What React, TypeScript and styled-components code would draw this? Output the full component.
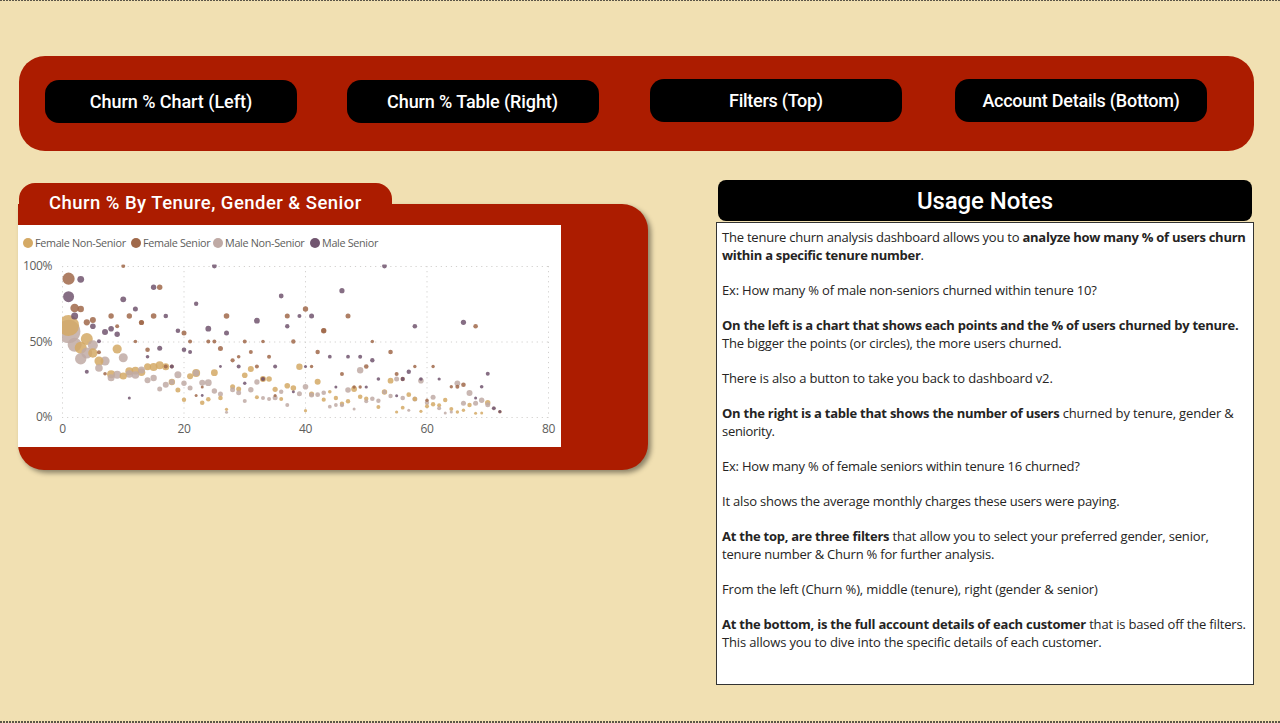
import React from "react";
import styled, { createGlobalStyle } from "styled-components";

const GlobalStyle = createGlobalStyle`
  * { box-sizing: border-box; }
  body { margin: 0; background: #f1e0b2; overflow: hidden; }
`;

const din = `Roboto, "Liberation Sans", sans-serif`;
const segoe = `"Open Sans", "Noto Sans", sans-serif`;

const Page = styled.div`
  width: 1280px;
  height: 723px;
  display: flex;
  flex-direction: column;
  background: #f1e0b2;
`;

const Rule = styled.div<{ $thickness: number }>`
  height: ${(p) => p.$thickness}px;
  flex: none;
  background: repeating-linear-gradient(90deg, #5c5648 0 2px, #f1e0b2 2px 3px);
`;

const Content = styled.main`
  flex: 1;
  min-height: 0;
  padding: 55px 26px 0 18px;
`;

const NavBar = styled.nav`
  display: flex;
  align-items: flex-start;
  height: 95px;
  margin-left: 1px;
  padding: 23px 0 0 26px;
  border-radius: 26px;
  background: #ac1c00;
`;

const NavButton = styled.button<{ $gap: number; $drop: number; $spacing: number }>`
  width: 252px;
  height: 43px;
  flex: none;
  margin: ${(p) => p.$drop}px ${(p) => p.$gap}px 0 0;
  padding: 0;
  border: 0;
  border-radius: 14px;
  background: #000;
  color: #fff;
  font: 500 18px/43px ${din};
  letter-spacing: ${(p) => p.$spacing}px;
  white-space: nowrap;
`;

const Columns = styled.div`
  display: flex;
  justify-content: space-between;
  align-items: flex-start;
  padding-top: 29px;
`;

const ChartCard = styled.section`
  width: 630px;
  padding-top: 2.5px;
`;

const ChartTab = styled.h2`
  position: relative;
  z-index: 1;
  width: 372.5px;
  height: 42.5px;
  margin: 0 0 0 1px;
  padding-left: 30px;
  border-radius: 16px 16px 0 0;
  background: #ac1c00;
  color: #fff;
  font: 500 18.5px/40px ${din};
  letter-spacing: 0.46px;
  white-space: nowrap;
`;

const ChartBody = styled.div`
  height: 266px;
  margin-top: -21px;
  padding-top: 21px;
  border-radius: 0 26px 26px 26px;
  background: #ac1c00;
  box-shadow: 3px 3px 5px rgba(0, 0, 0, 0.42);
`;

const ChartPanel = styled.div`
  width: 543px;
  height: 222px;
  background: #fff;
`;

const Legend = styled.div`
  display: flex;
  height: 28px;
  padding: 8px 0 0 5px;
  align-items: center;
`;

const LegendItem = styled.span<{ $width: number; $color: string }>`
  display: flex;
  align-items: center;
  width: ${(p) => p.$width}px;
  color: #605e5c;
  font: 10.8px/16px ${segoe};
  letter-spacing: -0.32px;
  white-space: nowrap;

  &::before {
    content: "";
    width: 10px;
    height: 10px;
    flex: none;
    margin-right: 2px;
    border-radius: 50%;
    background: ${(p) => p.$color};
  }
`;

const Plot = styled.svg`
  display: block;
  font: 12px ${segoe};
  letter-spacing: -0.4px;
  fill: #605e5c;
`;

const Notes = styled.section`
  width: 538px;
`;

const NotesTitle = styled.h2`
  height: 41px;
  margin: 0 2px 1px;
  border-radius: 8px;
  background: #000;
  color: #fff;
  font: 500 24px/42px ${din};
  letter-spacing: -0.1px;
  text-align: center;
`;

const NotesBox = styled.div`
  height: 463px;
  padding: 6.2px 5px;
  border: 1px solid #333;
  background: #fff;
  color: #252423;
  font: 13px/17.59px ${segoe};
`;

const Para = styled.p`
  margin: 0 0 17.59px;
`;

const Line = styled.span<{ $spacing?: number }>`
  display: block;
  white-space: nowrap;
  letter-spacing: ${(p) => p.$spacing ?? -0.2}px;
`;

const Strong = styled.b<{ $spacing?: number }>`
  letter-spacing: ${(p) => p.$spacing ?? -0.25}px;
`;

type Point = [tenure: number, y: number, r: number];

const femaleNonSenior: Point[] = [
  [1, 325.6, 10.5], [3, 347.7, 6], [4, 339, 6], [5, 353, 4.7], [6, 361, 4.5], [8, 374.3, 4], [9, 349, 4.6],
  [10, 376, 3.6], [11, 371.3, 4], [12, 370.7, 3.9], [13, 372.3, 3.8], [14, 366.7, 3.5], [15, 367, 4],
  [16, 365.3, 4], [17, 366.7, 3.5], [18, 382, 3.2], [19, 390, 2.5], [20, 399.7, 2.2], [21, 376.3, 3],
  [22, 373, 4], [23, 402.7, 2.3], [24, 399.3, 2.3], [25, 372.7, 3.4], [26, 398, 2.3], [27, 409.3, 1.6],
  [28, 386.7, 2.5], [29, 389, 2.5], [30, 375.3, 2.8], [31, 369, 3], [32, 397.3, 2], [33, 379, 3],
  [34, 379, 2.8], [35, 389.3, 2.6], [36, 399, 2], [37, 385.7, 2.8], [38, 388, 2.8], [39, 366.7, 3.2],
  [40, 410.7, 1.6], [41, 394, 2.6], [42, 381.7, 3], [43, 399.7, 2.1], [44, 391.7, 1.8], [45, 398, 2.2],
  [46, 403.7, 2.2], [47, 401.3, 2.2], [48, 389, 2.9], [49, 396.7, 2.3], [50, 398.7, 2.2], [52, 407, 2],
  [53, 392, 2.7], [54, 380.7, 2.9], [55, 412, 1.6], [56, 407.7, 1.9], [57, 394.7, 2.4], [58, 399, 2.2],
  [59, 411.3, 1.6], [60, 406.3, 2], [61, 404.3, 2.2], [62, 405.3, 2], [63, 400, 2.2], [64, 409, 2],
  [65, 412, 1.7], [66, 410.3, 1.7], [67, 405, 2.2], [68, 413.3, 1.5], [69, 413, 1.5], [70, 402.7, 2.7],
];

const femaleSenior: Point[] = [
  [1, 278.7, 6.1], [2, 308, 4.3], [3, 309, 3.2], [4, 322.3, 3.1], [5, 320, 3], [6, 352.3, 2], [7, 373.7, 1.8],
  [8, 316, 2.7], [9, 326.3, 2], [10, 266, 2], [11, 316, 2.7], [12, 341.5, 1.8], [13, 322.5, 2.6],
  [13, 322.5, 2.3], [14, 349.7, 2.3], [15, 316, 2.8], [16, 287.3, 2.7], [17, 366.5, 2], [18, 366.5, 2],
  [20, 333, 2.5], [21, 341.5, 2], [22, 395.5, 1.5], [23, 387, 1.5], [24, 341.5, 2], [25, 341.5, 2],
  [26, 348.5, 2.5], [27, 316, 2.8], [28, 360.3, 2.1], [29, 356.7, 1.8], [30, 341.5, 2], [31, 352, 2],
  [32, 366.5, 2], [33, 379, 2.2], [33, 341.5, 1.8], [34, 356.7, 2], [35, 395.5, 1.5], [37, 316, 2.5],
  [38, 341.5, 2.2], [40, 309, 2.7], [41, 366.5, 1.7], [42, 352, 2.2], [43, 330.7, 2.7], [43, 330.7, 2.4],
  [46, 374, 2], [47, 316, 2.5], [48, 387, 1.7], [49, 387, 1.7], [50, 366.5, 2.3], [51, 341.5, 1.7],
  [54, 352, 2.3], [55, 374, 2], [56, 379, 2.2], [58, 366.5, 1.7], [60, 400.3, 1.7], [61, 366.5, 1.7],
  [64, 386.7, 1.7], [65, 386.7, 2], [66, 384.7, 2.3], [68, 326.3, 2.3], [72, 411.7, 1.8],
];

const maleNonSenior: Point[] = [
  [1, 331.5, 11.8], [2, 344.7, 7], [3, 358.7, 5.7], [4, 353, 5.5], [5, 345.3, 5], [6, 368, 3.8], [7, 361, 4.6],
  [8, 377.7, 3.5], [9, 374.7, 4], [10, 357.7, 4.5], [11, 374, 3.8], [12, 375, 3.8], [13, 370, 3.5],
  [14, 380.3, 3], [15, 378, 3.2], [16, 389, 2.5], [17, 384.7, 3], [18, 382, 2.8], [19, 374.7, 3.5],
  [20, 383.3, 2.7], [21, 388, 2.5], [22, 373, 3.2], [23, 382.7, 3], [24, 382.7, 3.4], [25, 391, 2.7],
  [26, 394, 2.5], [27, 412.3, 1.5], [28, 389.7, 2.5], [29, 392.7, 2.5], [30, 401, 2], [31, 389.7, 2.7],
  [32, 382, 2.7], [33, 398, 2], [34, 399, 2], [35, 397.7, 2.5], [36, 391.7, 2.2], [37, 405, 2],
  [39, 393.7, 2.5], [40, 386.7, 2.8], [41, 395, 2.5], [42, 394.7, 2.4], [43, 392.7, 2.3], [44, 406.7, 1.9],
  [45, 405, 1.9], [46, 405.3, 2], [47, 390, 2.8], [48, 409, 1.5], [49, 370.3, 3.2], [50, 401.3, 2],
  [51, 398.7, 2.3], [52, 400.7, 2.2], [53, 392, 2.2], [54, 396, 2.2], [55, 379, 2.5], [56, 398, 2.3],
  [57, 410.3, 1.5], [58, 399, 2.5], [59, 380.7, 2.8], [60, 402.7, 2.2], [61, 397.3, 2.5], [62, 408.3, 2],
  [63, 413, 1.5], [64, 412, 1.6], [65, 383.3, 2.9], [66, 403.3, 2.5], [67, 393, 3], [68, 403.3, 2.5],
  [69, 400.3, 2.7], [70, 404.7, 2.5], [71, 408.3, 2.1],
];

const maleSenior: Point[] = [
  [1, 296.7, 5.5], [2, 316, 3.5], [3, 279.3, 3.4], [4, 371.7, 2], [5, 326.3, 2.8], [6, 341.3, 2], [7, 332, 3],
  [8, 328.7, 2.8], [9, 334.3, 2.7], [10, 299.3, 2.9], [11, 398, 1.5], [12, 309, 2.5], [14, 356.7, 1.8],
  [15, 287.3, 2.7], [16, 348.3, 2.5], [17, 316, 2.3], [18, 366.5, 1.9], [19, 330.7, 2.3], [20, 349.7, 2.3],
  [21, 352, 2], [22, 303.7, 2.2], [23, 395.5, 1.4], [24, 328.7, 2.9], [25, 266, 2.4], [26, 366.5, 1.4],
  [27, 333, 2.5], [29, 366.5, 2], [30, 383.3, 1.7], [32, 320.7, 2.9], [33, 379, 1.8], [35, 366.5, 2],
  [36, 296, 2.4], [37, 326.3, 2.2], [38, 391.7, 1.5], [39, 316, 2], [40, 366.5, 1.5], [41, 316, 2.5],
  [44, 356.7, 1.9], [45, 387, 1.5], [46, 290.7, 2.6], [47, 356.7, 1.9], [49, 356.7, 2], [50, 387, 1.6],
  [51, 360.3, 2.2], [52, 379, 1.8], [53, 266, 2.4], [55, 395.7, 1.5], [56, 379, 1.9], [57, 371.7, 2.2],
  [58, 326.3, 2.3], [59, 379, 1.8], [62, 379, 1.6], [66, 322.3, 2.6], [68, 398, 1.5], [69, 386.7, 1.8],
  [70, 373.7, 2], [71, 408.3, 1.8], [72, 411.7, 1.4],
];

const series = [
  { label: "Female Non-Senior", color: "#d4a965", width: 108, points: femaleNonSenior },
  { label: "Female Senior", color: "#a0694a", width: 82, points: femaleSenior },
  { label: "Male Non-Senior", color: "#bfaaa5", width: 97, points: maleNonSenior },
  { label: "Male Senior", color: "#71556f", width: 80, points: maleSenior },
];

const dots = series
  .flatMap((s) => s.points.map(([t, y, r]) => ({ x: 62.5 + t * 6.075, y, r, color: s.color })))
  .sort((a, b) => b.r - a.r);

const ticks = [0, 20, 40, 60, 80];
const levels: [string, number][] = [["100%", 266.5], ["50%", 342], ["0%", 417.5]];

function ScatterPlot() {
  return (
    <Plot width="543" height="194" viewBox="18 253 543 194">
      <defs>
        <clipPath id="plot-area">
          <rect x="62" y="264.5" width="488" height="153" />
        </clipPath>
      </defs>
      <g stroke="#d2d0ce" strokeWidth="1" strokeDasharray="1.2 3.85">
        {levels.map(([label, y]) => (
          <line key={label} x1="62" x2="549" y1={y} y2={y} />
        ))}
        {ticks.map((t) => (
          <line key={t} x1={62.5 + t * 6.075} x2={62.5 + t * 6.075} y1="266" y2="418" />
        ))}
      </g>
      <g clipPath="url(#plot-area)" fillOpacity="0.85">
        {dots.map((d, i) => (
          <circle key={i} cx={d.x} cy={d.y} r={d.r} fill={d.color} />
        ))}
      </g>
      {levels.map(([label, y]) => (
        <text key={label} x="52" y={y + 3.7} textAnchor="end">{label}</text>
      ))}
      {ticks.map((t) => (
        <text key={t} x={62.5 + t * 6.075} y="433" textAnchor="middle">{t}</text>
      ))}
    </Plot>
  );
}

export default function App() {
  return (
    <Page>
      <GlobalStyle />
      <Rule $thickness={1} />
      <Content>
        <NavBar>
          <NavButton $gap={49.5} $drop={1} $spacing={-0.05}>Churn % Chart (Left)</NavButton>
          <NavButton $gap={51.5} $drop={1} $spacing={-0.1}>Churn % Table (Right)</NavButton>
          <NavButton $gap={53} $drop={0} $spacing={-0.28}>Filters (Top)</NavButton>
          <NavButton $gap={0} $drop={0} $spacing={-0.25}>Account Details (Bottom)</NavButton>
        </NavBar>
        <Columns>
          <ChartCard>
            <ChartTab>Churn % By Tenure, Gender &amp; Senior</ChartTab>
            <ChartBody>
              <ChartPanel>
                <Legend>
                  {series.map((s) => (
                    <LegendItem key={s.label} $width={s.width} $color={s.color}>{s.label}</LegendItem>
                  ))}
                </Legend>
                <ScatterPlot />
              </ChartPanel>
            </ChartBody>
          </ChartCard>
          <Notes>
            <NotesTitle>Usage Notes</NotesTitle>
            <NotesBox>
              <Para>
                <Line $spacing={-0.22}>The tenure churn analysis dashboard allows you to <Strong $spacing={-0.28}>analyze how many % of users churn</Strong></Line>
                <Line><Strong $spacing={-0.29}>within a specific tenure number</Strong>.</Line>
              </Para>
              <Para><Line $spacing={-0.19}>Ex: How many % of male non-seniors churned within tenure 10?</Line></Para>
              <Para>
                <Line><Strong>On the left is a chart that shows each points and the % of users churned by tenure.</Strong></Line>
                <Line $spacing={-0.18}>The bigger the points (or circles), the more users churned.</Line>
              </Para>
              <Para><Line $spacing={-0.145}>There is also a button to take you back to dashboard v2.</Line></Para>
              <Para>
                <Line $spacing={-0.145}><Strong>On the right is a table that shows the number of users</Strong> churned by tenure, gender &amp;</Line>
                <Line $spacing={-0.3}>seniority.</Line>
              </Para>
              <Para><Line $spacing={-0.21}>Ex: How many % of female seniors within tenure 16 churned?</Line></Para>
              <Para><Line $spacing={-0.19}>It also shows the average monthly charges these users were paying.</Line></Para>
              <Para>
                <Line $spacing={-0.18}><Strong>At the top, are three filters</Strong> that allow you to select your preferred gender, senior,</Line>
                <Line $spacing={-0.22}>tenure number &amp; Churn % for further analysis.</Line>
              </Para>
              <Para><Line $spacing={-0.125}>From the left (Churn %), middle (tenure), right (gender &amp; senior)</Line></Para>
              <Para>
                <Line $spacing={-0.17}><Strong $spacing={-0.23}>At the bottom, is the full account details of each customer</Strong> that is based off the filters.</Line>
                <Line $spacing={-0.15}>This allows you to dive into the specific details of each customer.</Line>
              </Para>
            </NotesBox>
          </Notes>
        </Columns>
      </Content>
      <Rule $thickness={2} />
    </Page>
  );
}
